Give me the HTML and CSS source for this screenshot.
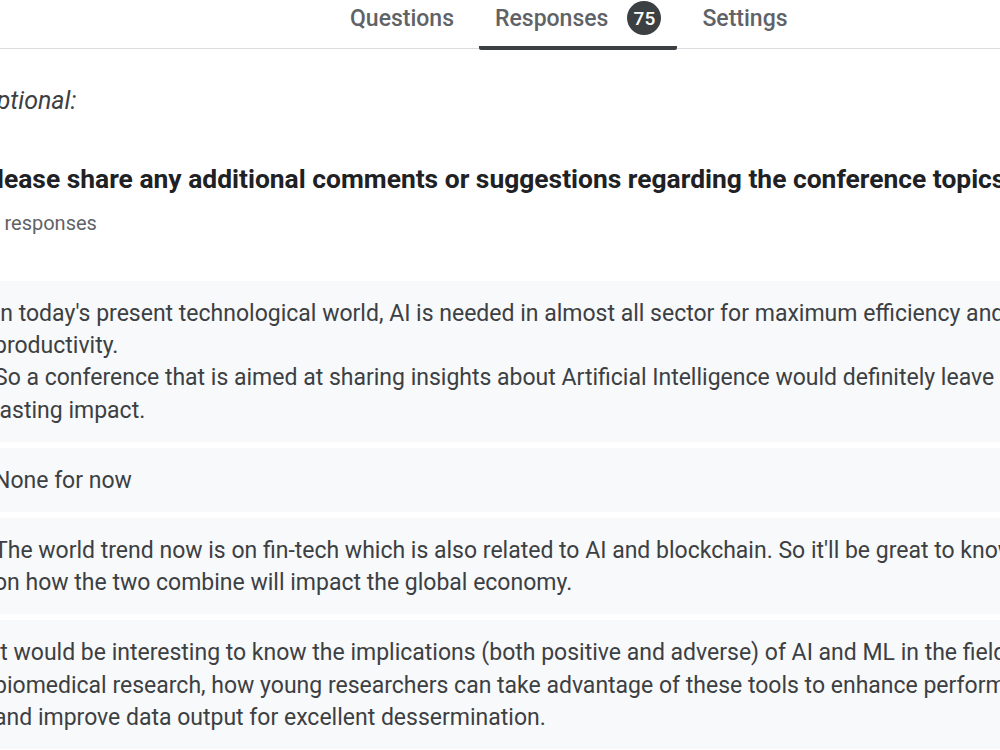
FILE: index.html
```html
<!DOCTYPE html>
<html lang="en">
<head>
    <meta charset="UTF-8">
    <meta name="viewport" content="width=device-width, initial-scale=1.0">
    <title>Responses</title>
    <link rel="stylesheet" href="styles.css">
</head>
<body>
    <div class="tabs">
        <div class="tab">Questions</div>
        <div class="tab active">Responses <span class="badge">75</span></div>
        <div class="tab">Settings</div>
    </div>

    <div class="page">
        <div class="section-label">Optional:</div>

        <div class="question">
            <div class="question-title">Please share any additional comments or suggestions regarding the conference topics.</div>
            <div class="question-count">41 responses</div>
        </div>

        <div class="answers">
            <div class="answer">In today's present technological world, AI is needed in almost all sector for maximum efficiency and productivity.<br>So a conference that is aimed at sharing insights about Artificial Intelligence would definitely leave a lasting impact.</div>
            <div class="answer">None for now</div>
            <div class="answer">The world trend now is on fin-tech which is also related to AI and blockchain. So it'll be great to know more on how the two combine will impact the global economy.</div>
            <div class="answer">It would be interesting to know the implications (both positive and adverse) of AI and ML in the field of biomedical research, how young researchers can take advantage of these tools to enhance performance and improve data output for excellent dessermination.</div>
            <div class="answer">More sessions on practical applications would be helpful.</div>
        </div>
    </div>
</body>
</html>
```

FILE: styles.css
```css
body {
    margin: 0;
    font-family: Roboto, "Liberation Sans", Arial, sans-serif;
    background: #fff;
    color: #3c4043;
    overflow: hidden;
    height: 750px;
}
.tabs {
    display: flex;
    gap: 9px;
    height: 48px;
    padding-left: 334px;
    border-bottom: 1px solid #dadce0;
}
.tab {
    display: flex;
    align-items: center;
    gap: 19px;
    padding: 0 16px 10px;
    font-size: 23px;
    font-weight: 500;
    color: #5f6368;
    border-bottom: 4px solid transparent;
    border-radius: 2px;
    margin-bottom: -2px;
}
.tab.active {
    border-bottom-color: #3c4043;
}
.badge {
    display: inline-flex;
    align-items: center;
    justify-content: center;
    width: 34px;
    height: 34px;
    border-radius: 50%;
    background: #3c4043;
    color: #fff;
    font-size: 19px;
    font-weight: 500;
}
.page {
    margin-left: -20px;
    width: 1150px;
}
.section-label {
    margin-top: 36px;
    font-size: 25px;
    font-style: italic;
    color: #3c4043;
    line-height: 32px;
}
.question {
    margin-top: 46px;
}
.question-title {
    font-size: 26.4px;
    font-weight: 700;
    color: #202124;
    line-height: 32px;
    white-space: nowrap;
}
.question-count {
    margin-top: 16px;
    margin-left: -3px;
    font-size: 20px;
    color: #5f6368;
    line-height: 24px;
}
.answers {
    margin-top: 46px;
    margin-left: -10px;
    width: 1134px;
    display: flex;
    flex-direction: column;
    gap: 6px;
}
.answer {
    background: #f8f9fa;
    padding: 17px 24px 15px;
    font-size: 23px;
    line-height: 32.2px;
    color: #3c4043;
    border-radius: 4px;
}
```
